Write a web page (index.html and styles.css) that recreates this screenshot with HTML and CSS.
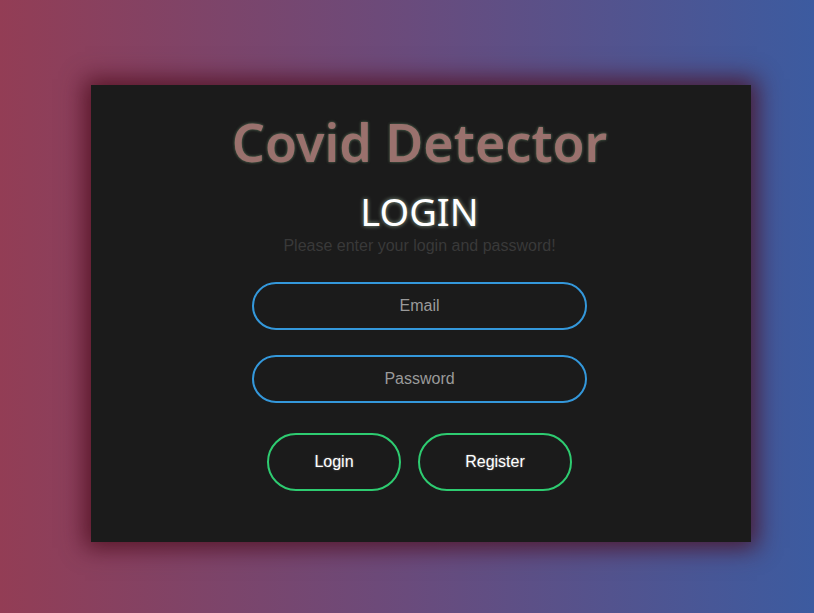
FILE: index.html
```html
<!DOCTYPE html>
<html lang="en">
<head>
<meta charset="utf-8">
<title>Covid Detector</title>
<link rel="stylesheet" href="styles.css">
</head>
<body>
<div class="page">
  <div class="card">
    <h1 class="brand">Covid Detector</h1>
    <h2 class="heading">LOGIN</h2>
    <p class="hint">Please enter your login and password!</p>
    <form class="form">
      <input class="field" type="text" placeholder="Email">
      <input class="field" type="password" placeholder="Password">
      <div class="actions">
        <button class="btn btn-login" type="button">Login</button>
        <button class="btn btn-register" type="button">Register</button>
      </div>
    </form>
  </div>
</div>
</body>
</html>
```
FILE: styles.css
```css
html, body {
  margin: 0;
  padding: 0;
  height: 100%;
}
body {
  background: linear-gradient(to right, #933d55 0%, #6a4b7c 50%, #3c5ba0 100%);
  font-family: "Liberation Sans", Arial, sans-serif;
  overflow: hidden;
}
.page {
  padding: 85px 63px 0 91px;
}
.card {
  width: 660px;
  height: 457px;
  box-sizing: border-box;
  background: #1b1b1b;
  box-shadow: 0 0 22px 6px rgba(75, 10, 25, 0.8);
  display: flex;
  flex-direction: column;
  align-items: center;
  padding-top: 25px;
  padding-right: 3px;
}
.brand {
  margin: 0;
  font-family: "Noto Sans", "Open Sans", sans-serif;
  font-weight: 600;
  font-size: 52px;
  line-height: 64px;
  color: #9a716d;
  text-shadow: 0 0 3px rgba(150, 200, 150, 0.55);
}
.heading {
  margin: 14px 0 0;
  font-family: "Noto Sans", "Open Sans", sans-serif;
  font-weight: 400;
  font-size: 38px;
  line-height: 46px;
  color: #ffffff;
  text-shadow: 0 0 4px rgba(220, 255, 220, 0.6);
}
.hint {
  margin: 1px 0 0;
  font-size: 16px;
  line-height: 22px;
  color: #393939;
}
.form {
  margin-top: 25px;
  display: flex;
  flex-direction: column;
  align-items: center;
}
.field {
  width: 335px;
  height: 48px;
  box-sizing: border-box;
  border: 2px solid #3498db;
  border-radius: 24px;
  background: transparent;
  text-align: center;
  font-family: "Liberation Sans", Arial, sans-serif;
  font-size: 16px;
  color: #ddd;
  outline: none;
  margin-bottom: 25px;
}
.field::placeholder {
  color: #9a9a9a;
}
.actions {
  display: flex;
  gap: 17px;
  margin-top: 5px;
}
.btn {
  height: 58px;
  box-sizing: border-box;
  border: 2px solid #2ecc71;
  border-radius: 29px;
  background: transparent;
  color: #ffffff;
  font-family: "Liberation Sans", Arial, sans-serif;
  font-size: 16px;
  text-shadow: 0 0 2px rgba(255, 255, 255, 0.4);
  cursor: pointer;
}
.btn-login {
  width: 134px;
}
.btn-register {
  width: 154px;
}
```
